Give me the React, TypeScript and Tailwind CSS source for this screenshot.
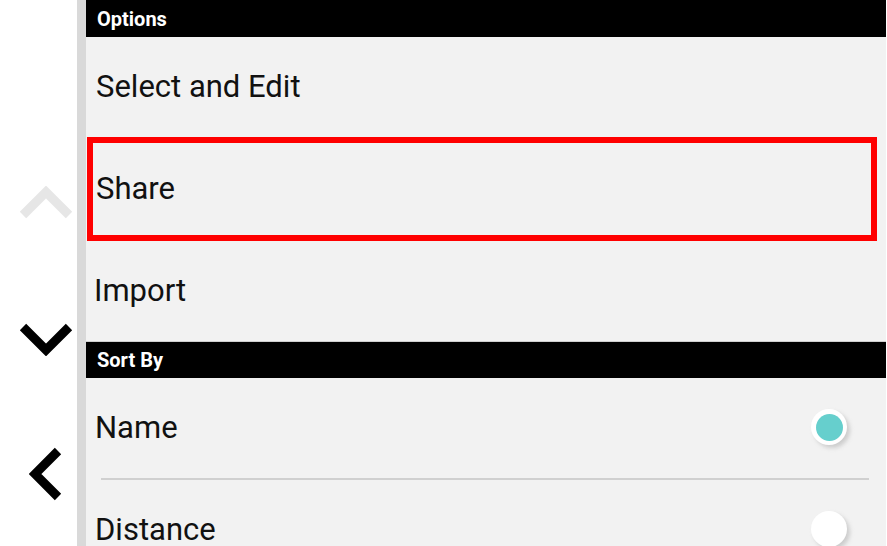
import React from "react";

// Options / Sort By drawer with the side navigation arrows.
function Chevron({ dir, color }: { dir: "up" | "down" | "left"; color: string }) {
  if (dir === "left") {
    return (
      <svg width="34" height="54" viewBox="0 0 34 54">
        <polyline points="29,4 6,27 29,50" fill="none" stroke={color} strokeWidth="9" strokeLinejoin="miter" />
      </svg>
    );
  }
  const pts = dir === "up" ? "4,29 27,6 50,29" : "4,4 27,27 50,4";
  return (
    <svg width="54" height="33" viewBox="0 0 54 33">
      <polyline points={pts} fill="none" stroke={color} strokeWidth="9" strokeLinejoin="miter" />
    </svg>
  );
}

function Radio({ on }: { on: boolean }) {
  return (
    <div className="relative h-[38px] w-[38px]">
      <div className="absolute left-[3px] top-[3px] h-[36px] w-[36px] rounded-full bg-[#bdbdbd] blur-[2px] opacity-70" />
      <div className="relative flex h-[36px] w-[36px] items-center justify-center rounded-full bg-white">
        {on && <div className="h-[27px] w-[27px] rounded-full bg-[#66cfcd]" />}
      </div>
    </div>
  );
}

export default function App() {
  return (
    <div className="flex h-[546px] w-[887px] overflow-hidden bg-white font-['Roboto',sans-serif] text-[#111]">
      <div className="flex w-[77px] shrink-0 flex-col items-start">
        <div className="ml-[19px] mt-[186px]">
          <Chevron dir="up" color="#e6e6e6" />
        </div>
        <div className="ml-[19px] mt-[104px]">
          <Chevron dir="down" color="#000" />
        </div>
        <div className="ml-[29px] mt-[91px]">
          <Chevron dir="left" color="#000" />
        </div>
      </div>
      <div className="w-[9px] shrink-0 bg-[#d9d9d9]" />
      <div className="flex w-[800px] shrink-0 flex-col bg-[#f2f2f2]">
        <div className="flex h-[37px] shrink-0 items-center bg-black pl-[11px] text-[20px] font-bold text-white">Options</div>
        <div className="flex h-[100px] shrink-0 items-center pl-[10px] text-[31px]">Select and Edit</div>
        <div className="ml-[1px] flex h-[104px] w-[790px] shrink-0 items-center border-[6px] border-[#f00] pl-[3px] text-[31px]">
          Share
        </div>
        <div className="flex h-[100px] shrink-0 items-center pl-[8px] text-[31px]">Import</div>
        <div className="flex h-[37px] shrink-0 items-center border-t border-[#cfcfcf] bg-black pl-[11px] text-[20px] font-bold text-white">
          Sort By
        </div>
        <div className="flex h-[100px] shrink-0 items-center justify-between pl-[9px] pr-[37px] text-[31px]">
          <span>Name</span>
          <Radio on />
        </div>
        <div className="ml-[15px] h-[2px] w-[768px] shrink-0 bg-[#d0d0d0]" />
        <div className="flex h-[100px] shrink-0 items-center justify-between pl-[9px] pr-[37px] text-[31px]">
          <span>Distance</span>
          <Radio on={false} />
        </div>
      </div>
    </div>
  );
}
